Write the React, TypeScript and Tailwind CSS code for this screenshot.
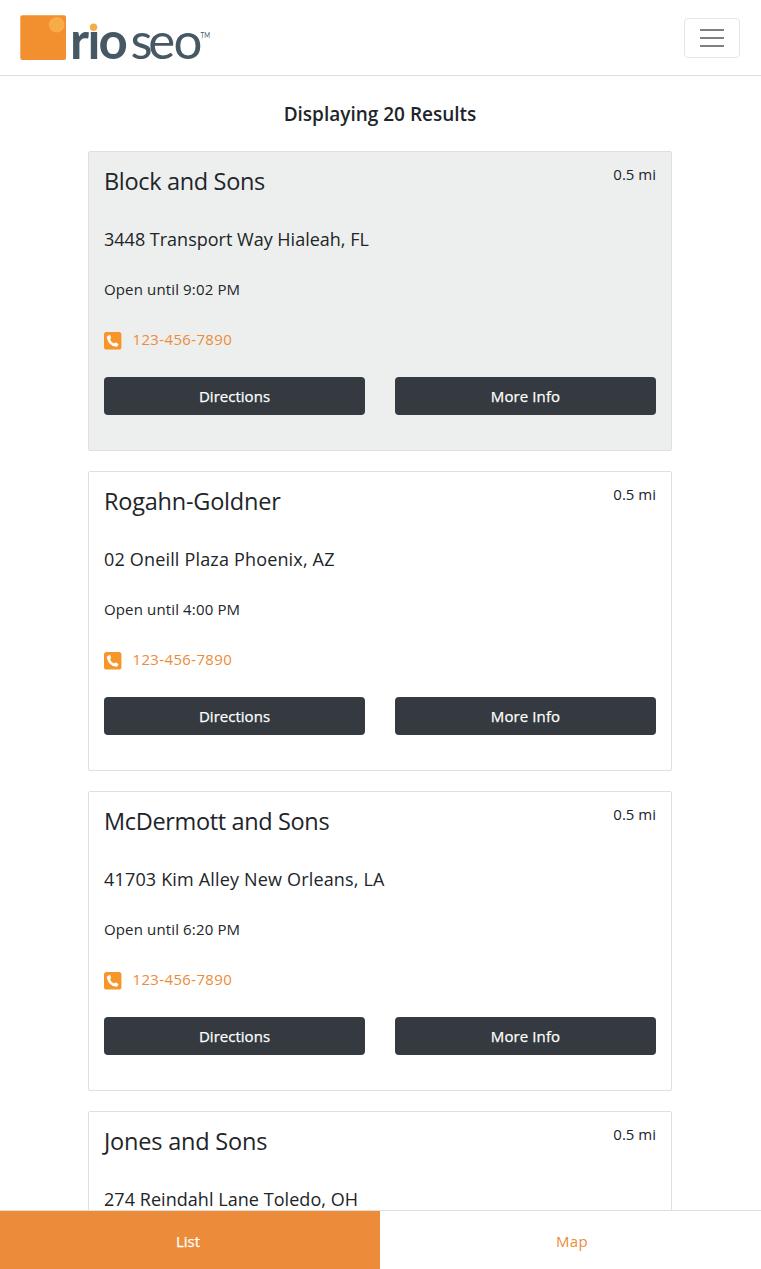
import React from "react";

type Location = { name: string; address: string; hours: string; nameClass: string; addressClass: string };

const locations: Location[] = [
  {
    name: "Block and Sons",
    address: "3448 Transport Way Hialeah, FL",
    hours: "Open until 9:02 PM",
    nameClass: "tracking-[-0.33px]",
    addressClass: "tracking-[0px]",
  },
  {
    name: "Rogahn-Goldner",
    address: "02 Oneill Plaza Phoenix, AZ",
    hours: "Open until 4:00 PM",
    nameClass: "tracking-[-0.22px]",
    addressClass: "tracking-[0.17px]",
  },
  {
    name: "McDermott and Sons",
    address: "41703 Kim Alley New Orleans, LA",
    hours: "Open until 6:20 PM",
    nameClass: "tracking-[-0.35px]",
    addressClass: "tracking-[0.17px]",
  },
  {
    name: "Jones and Sons",
    address: "274 Reindahl Lane Toledo, OH",
    hours: "",
    nameClass: "tracking-[-0.2px]",
    addressClass: "tracking-[0.05px]",
  },
];

function Logo() {
  return (
    <svg width="192" height="48" viewBox="0 0 192 48" className="block" role="img" aria-label="rio seo">
      <rect x="0.3" y="0.3" width="45.7" height="44.7" rx="2" fill="#f28f2f" />
      <circle cx="36.7" cy="9.8" r="7.8" fill="#f8ac48" />
      <g fill="#475865" fontFamily="Lato, sans-serif">
        <text x="50 67.5 78.4" y="44" fontSize="51" fontWeight="700">rio</text>
        <text x="110.5 128.3 153.5" y="44" fontSize="51" fontWeight="400">seo</text>
        <text x="180.5" y="23" fontSize="7" textLength="9.5" lengthAdjust="spacingAndGlyphs">TM</text>
      </g>
      <rect x="67" y="4" width="13" height="12.5" fill="#fff" />
      <circle cx="73.6" cy="12.3" r="3.7" fill="#f8ac48" />
    </svg>
  );
}

function PhoneIcon() {
  return (
    <svg width="18" height="18" viewBox="0 0 18 18" className="mt-[3px] block shrink-0" aria-hidden="true">
      <rect x="0" y="0" width="17.4" height="17.6" rx="2.6" fill="#f7942a" />
      <path
        d="M3.1 4.4 5.3 2.9Q5.9 2.7 6.2 3.3L7.1 5.7Q7.3 6.2 6.9 6.6L6 7.5Q7.1 10 9.9 11.5L10.9 10.6Q11.3 10.3 11.8 10.5L14.2 11.7Q14.7 12 14.4 12.6L13.4 14.3Q13.1 14.7 12.4 14.7 8.3 14.4 5.5 11.4 2.9 8.6 2.8 5.1 2.8 4.6 3.1 4.4Z"
        fill="#fff"
      />
    </svg>
  );
}

function Card({ location, active }: { location: Location; active: boolean }) {
  return (
    <article
      className={`h-[300px] shrink-0 rounded-xs border border-[#dfdfdf] px-[15px] pt-[14px] ${active ? "bg-[#edefee]" : "bg-white"}`}
    >
      <div className="flex justify-between">
        <h2 className={`text-[23.5px] leading-[30px] ${location.nameClass}`}>{location.name}</h2>
        <span className="text-[15px] leading-[16px]">0.5 mi</span>
      </div>
      <p className={`mt-[30px] text-[18px] leading-[27px] ${location.addressClass}`}>{location.address}</p>
      {location.hours && (
        <>
          <p className="mt-[24px] text-[15px] leading-6 tracking-[0.14px]">{location.hours}</p>
          <a className="mt-[26px] flex items-center gap-[10.5px] text-[15px] leading-6 tracking-[0.35px] text-[#ec8c3a]">
            <PhoneIcon />
            <span>123-456-7890</span>
          </a>
          <div className="mt-[26px] grid grid-cols-2 gap-[30px]">
            <button className="h-[38px] rounded bg-[#343a40] text-[15px] tracking-[0.02px] text-white [-webkit-text-stroke:0.25px_white]">
              Directions
            </button>
            <button className="h-[38px] rounded bg-[#343a40] text-[15px] tracking-[0.1px] text-white [-webkit-text-stroke:0.25px_white]">
              More Info
            </button>
          </div>
        </>
      )}
    </article>
  );
}

export default function App() {
  return (
    <div className="flex h-[1269px] flex-col overflow-hidden bg-white font-['Open_Sans','Noto_Sans',sans-serif] text-[#212529]">
      <header className="flex h-[76px] shrink-0 items-center justify-between border-b border-[#dfdfdf] pr-[21px] pl-5">
        <div className="pt-[3px]">
          <Logo />
        </div>
        <button aria-label="Menu" className="flex h-10 w-14 flex-col items-center justify-center gap-1.5 rounded border border-[#e5e5e5]">
          <span className="h-0.5 w-6 bg-[#808080]" />
          <span className="h-0.5 w-6 bg-[#808080]" />
          <span className="h-0.5 w-6 bg-[#808080]" />
        </button>
      </header>
      <main className="flex min-h-0 flex-1 flex-col overflow-hidden">
        <h1 className="mt-6 mr-px shrink-0 text-center text-[19px] leading-7 font-semibold">Displaying 20 Results</h1>
        <section className="mt-[23px] ml-[88px] flex w-[584px] flex-col gap-5">
          {locations.map((location, index) => (
            <Card key={location.name} location={location} active={index === 0} />
          ))}
        </section>
      </main>
      <nav className="flex h-[59px] shrink-0 border-t border-[#dfdfdf] text-[15px] text-[#ec8c3a]">
        <button className="w-[380px] bg-[#ec8c3a] pt-0.5 pr-1 text-white [-webkit-text-stroke:0.25px_white]">List</button>
        <button className="flex-1 pt-0.5 pl-[3px] tracking-[0.3px]">Map</button>
      </nav>
    </div>
  );
}
